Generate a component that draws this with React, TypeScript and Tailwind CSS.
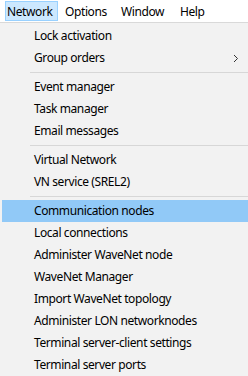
import React from "react";

type Item = { label: string; sep?: false; sub?: boolean; active?: boolean } | { sep: true };

const items: Item[] = [
  { label: "Lock activation" },
  { label: "Group orders", sub: true },
  { sep: true },
  { label: "Event manager" },
  { label: "Task manager" },
  { label: "Email messages" },
  { sep: true },
  { label: "Virtual Network" },
  { label: "VN service (SREL2)" },
  { sep: true },
  { label: "Communication nodes", active: true },
  { label: "Local connections" },
  { label: "Administer WaveNet node" },
  { label: "WaveNet Manager" },
  { label: "Import WaveNet topology" },
  { label: "Administer LON networknodes" },
  { label: "Terminal server-client settings" },
  { label: "Terminal server ports" },
];

export default function App() {
  return (
    <div
      className="w-[248px] h-[376px] overflow-hidden bg-[#f2f2f2] text-[12px] tracking-[-0.4px] text-black flex flex-col"
      style={{ fontFamily: '"Noto Sans", "Liberation Sans", sans-serif' }}
    >
      <div className="h-[22px] bg-white flex items-start pt-[1px] shrink-0">
        <div className="ml-[5px] h-[20px] w-[53px] border border-[#99d1ff] bg-[#cce8ff] pl-[1px] pt-[1px] flex items-center leading-none">
          Network
        </div>
        <div className="h-[20px] pl-[7px] w-[56px] pt-[1px] flex items-center leading-none">Options</div>
        <div className="h-[20px] pl-[7px] w-[59px] pt-[1px] flex items-center leading-none">Window</div>
        <div className="h-[20px] pl-[7px] pt-[1px] flex items-center leading-none">Help</div>
      </div>
      <div className="h-[1px] bg-[#d9d9d9] shrink-0" />
      <div className="flex flex-col pt-[2px] pl-[2px]">
        {items.map((it, i) =>
          it.sep ? (
            <div key={i} className="h-[7px] flex items-start pt-[3px] pl-[28px]">
              <div className="h-[1px] w-full bg-[#d7d7d7]" />
            </div>
          ) : (
            <div
              key={i}
              className={`h-[22px] flex items-center pl-[32px] pr-[8px] leading-none ${
                it.active ? "bg-[#91c9f7]" : ""
              }`}
            >
              <span className="flex-1 whitespace-nowrap">{it.label}</span>
              {it.sub && (
                <svg width="6" height="9" viewBox="0 0 6 9" className="mr-[1px]">
                  <path d="M1 1 L4.5 4.5 L1 8" fill="none" stroke="#333" strokeWidth="1" />
                </svg>
              )}
            </div>
          )
        )}
      </div>
    </div>
  );
}
